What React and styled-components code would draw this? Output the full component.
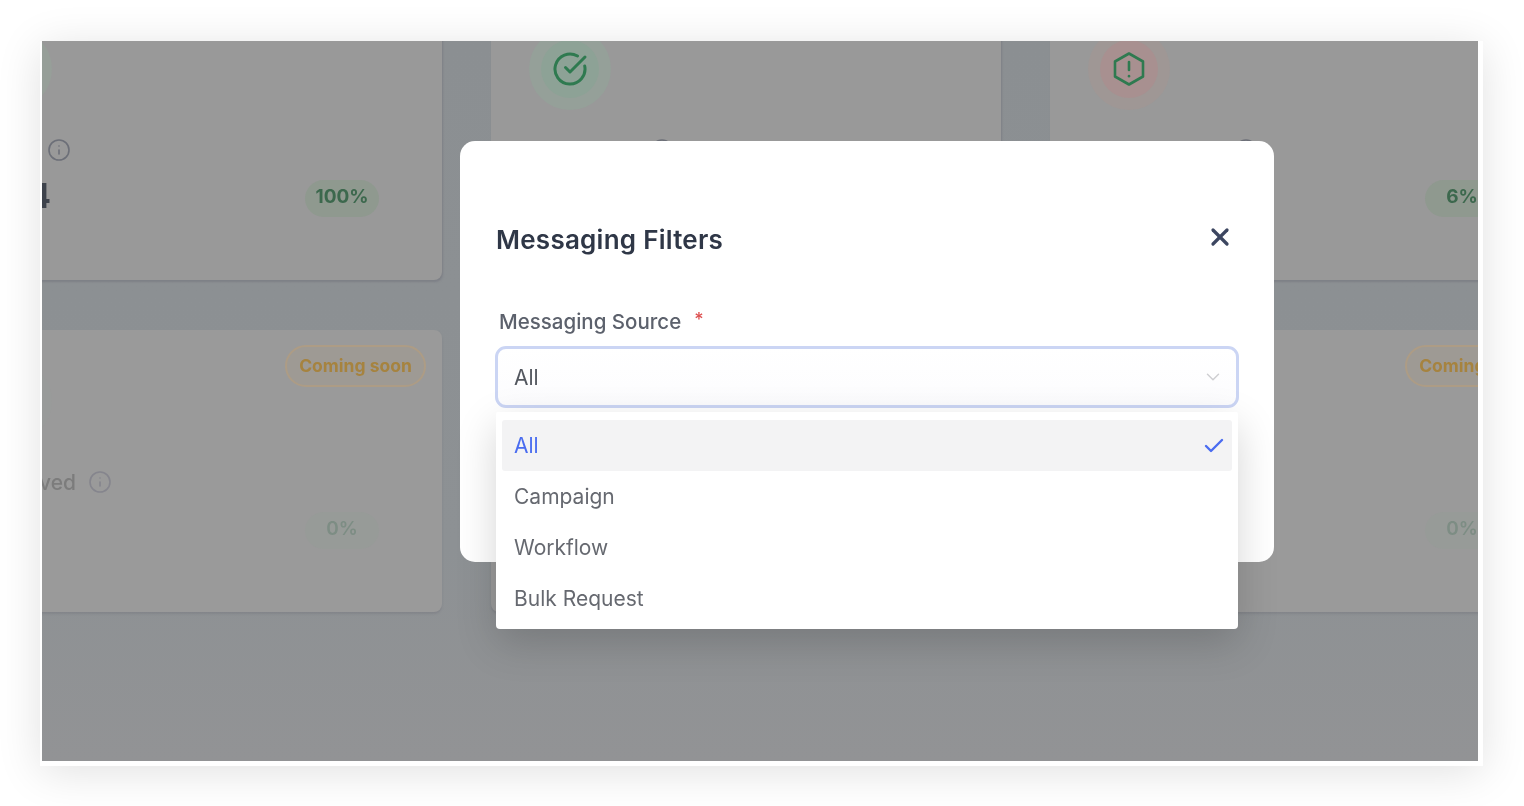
import React from "react";
import styled, { createGlobalStyle } from "styled-components";
import { Check, ChevronDown, CircleCheckBig, Info, X } from "lucide-react";

const Global = createGlobalStyle`
  html, body { margin: 0; padding: 0; background: #fff; height: 806px; overflow: hidden; }
  body { font-family: Inter, "Liberation Sans", sans-serif; }
`;

const Frame = styled.div`
  box-sizing: border-box;
  margin: 41px 0 0 40px;
  width: 1443px;
  height: 725px;
  padding: 0 5px 5px 2px;
  background: #fff;
  box-shadow: 0 6px 42px rgba(0, 0, 0, 0.12);
`;

const Shot = styled.div`
  position: relative;
  height: 720px;
  overflow: hidden;
  background: linear-gradient(#8b8f92, #8d9194 70%, #929395);
  filter: blur(0.7px);
`;

const CardGrid = styled.div`
  display: grid;
  grid-template-columns: 510px 510px 512px;
  grid-auto-rows: 282px;
  column-gap: 49px;
  row-gap: 50px;
  margin: -43px 0 0 -110px;
`;

const Card = styled.div`
  position: relative;
  box-sizing: border-box;
  padding: 30px 63px 0 38px;
  background: ${(p) => (p.$soon ? "#9a9a9a" : "#999999")};
  border-radius: 8px;
  box-shadow: ${(p) =>
    p.$soon
      ? "0 2px 2px rgba(105, 105, 115, 0.3)"
      : "1px 2px 2px rgba(105, 105, 118, 0.4)"};
`;

const Halo = styled.div`
  width: 82px;
  height: 82px;
  border-radius: 50%;
  display: flex;
  align-items: center;
  justify-content: center;
  color: ${(p) => p.$ink};
  background: ${(p) => p.$outer};
`;

const HaloCore = styled.div`
  width: 58px;
  height: 58px;
  border-radius: 50%;
  display: flex;
  align-items: center;
  justify-content: center;
  background: ${(p) => p.$inner};
`;

const LabelRow = styled.div`
  display: flex;
  align-items: center;
  height: 24px;
  margin-top: 28px;
  color: ${(p) => p.$ink};
`;

const LabelText = styled.span`
  flex: none;
  box-sizing: border-box;
  width: ${(p) => p.$w}px;
  padding-right: 12px;
  text-align: right;
  font-size: 21px;
  font-weight: 500;
  color: #7c7c7c;
  white-space: nowrap;
`;

const ValueRow = styled.div`
  display: flex;
  align-items: center;
  justify-content: space-between;
  height: 37px;
  margin-top: 18px;
`;

const Value = styled.span`
  font-size: 34px;
  font-weight: 700;
  line-height: 37px;
  margin-top: -6px;
  color: #3e434c;
`;

const Pct = styled.span`
  box-sizing: border-box;
  margin-left: auto;
  min-width: 74px;
  height: 37px;
  padding: 0 4px 5px;
  border-radius: 19px;
  display: flex;
  align-items: center;
  justify-content: center;
  font-size: 19px;
  font-weight: ${(p) => (p.$muted ? 600 : 700)};
  color: ${(p) => (p.$muted ? "#7d8d84" : "#3c684d")};
  background: ${(p) => (p.$muted ? "#979b98" : "#8f998f")};
`;

const Soon = styled.span`
  position: absolute;
  top: 15px;
  right: 16px;
  box-sizing: border-box;
  width: 141px;
  height: 42px;
  border-radius: 21px;
  border: 2px solid #ad9c85;
  background: #9e9a94;
  color: #a6833f;
  font-size: 17.5px;
  font-weight: 700;
  padding-bottom: 2px;
  display: flex;
  align-items: center;
  justify-content: center;
  white-space: nowrap;
`;

const Modal = styled.div`
  position: absolute;
  left: 418px;
  top: 100px;
  box-sizing: border-box;
  width: 814px;
  height: 421px;
  padding: 84px 35px 0 36px;
  background: #fff;
  border-radius: 15px;
`;

const ModalHead = styled.div`
  display: flex;
  align-items: center;
  justify-content: space-between;
  height: 30px;
  margin-bottom: 53px;
`;

const Title = styled.h2`
  margin: 0;
  font-size: 26px;
  line-height: 30px;
  font-weight: 600;
  letter-spacing: 0.25px;
  color: #2f3747;
`;

const Close = styled.button`
  border: 0;
  padding: 0;
  background: none;
  color: #3c4660;
  display: flex;
  margin: -7px 5px 0 0;
`;

const FieldLabel = styled.div`
  display: flex;
  align-items: center;
  height: 26px;
  padding-left: 3px;
  font-size: 20.5px;
  font-weight: 500;
  color: #5c616c;
`;

const Star = styled.span`
  margin: -4px 0 0 13px;
  font-size: 18px;
  color: #dd4f4f;
`;

const Select = styled.div`
  box-sizing: border-box;
  display: flex;
  align-items: center;
  justify-content: space-between;
  margin: 12px 0 0 -1px;
  width: 744px;
  height: 62px;
  padding: 0 12px 0 16px;
  border: 3px solid #cbd5f4;
  border-radius: 11px;
  background: linear-gradient(#fff, #fcfcfe);
  font-size: 21px;
  color: #53575f;
`;

const Caret = styled(ChevronDown)`
  color: #cfcfd2;
`;

const Menu = styled.ul`
  position: absolute;
  left: 36px;
  top: 271px;
  box-sizing: border-box;
  width: 742px;
  height: 217px;
  margin: 0;
  padding: 8px 6px 0;
  list-style: none;
  background: #fff;
  border-radius: 2px 2px 4px 4px;
  box-shadow: 0 14px 40px rgba(0, 0, 0, 0.17);
`;

const Option = styled.li`
  box-sizing: border-box;
  display: flex;
  align-items: center;
  justify-content: space-between;
  height: 51px;
  padding: 0 6px 0 12px;
  border-radius: 3px;
  font-size: 21px;
  color: ${(p) => (p.$on ? "#4a6cf0" : "#666970")};
  background: ${(p) => (p.$on ? "#f3f3f4" : "transparent")};
`;

const HexAlert = () => (
  <svg width="34" height="36" viewBox="0 0 34 36" fill="none" stroke="currentColor" strokeWidth="2.6" strokeLinejoin="round" strokeLinecap="round">
    <path d="M17 2.5 31 10.5V25.5L17 33.5 3 25.5V10.5Z" />
    <path d="M17 11V19" />
    <path d="M17 25V25.2" />
  </svg>
);

const cards = [
  { halo: ["#979f99", "#91a097", "#3b7a55"], w: 77, value: "1234", pct: "100%" },
  { halo: ["#95a099", "#8da296", "#2f7a50"], w: 121, icon: <CircleCheckBig size={36} strokeWidth={2} />, pct: "" },
  { halo: ["#9f9795", "#a89090", "#2f7a50"], w: 146, icon: <HexAlert />, pct: "6%" },
  { halo: ["#999b9a", "#969d99", "#6f8a78"], w: 118, text: "Received", pct: "0%", muted: true, soon: true },
  { halo: ["#999b9a", "#969d99", "#6f8a78"], w: 118, pct: "0%", muted: true, soon: true },
  { halo: ["#999b9a", "#969d99", "#6f8a78"], w: 118, pct: "0%", muted: true, soon: true },
];

const options = ["All", "Campaign", "Workflow", "Bulk Request"];

export default function App() {
  return (
    <>
      <Global />
      <Frame>
        <Shot>
          <CardGrid>
            {cards.map((c, i) => (
              <Card key={i} $soon={c.soon}>
                <Halo $outer={c.halo[0]} $ink={c.halo[2]}>
                  <HaloCore $inner={c.halo[1]}>{c.icon}</HaloCore>
                </Halo>
                <LabelRow $ink={c.soon ? "#85858d" : "#6c6f78"}>
                  <LabelText $w={c.w}>{c.text}</LabelText>
                  <Info size={24} strokeWidth={1.6} />
                </LabelRow>
                <ValueRow>
                  {c.value && <Value>{c.value}</Value>}
                  {c.pct && <Pct $muted={c.muted}>{c.pct}</Pct>}
                </ValueRow>
                {c.soon && <Soon>Coming soon</Soon>}
              </Card>
            ))}
          </CardGrid>
          <Modal>
            <ModalHead>
              <Title>Messaging Filters</Title>
              <Close aria-label="Close">
                <X size={28} strokeWidth={2.8} />
              </Close>
            </ModalHead>
            <FieldLabel>
              Messaging Source<Star>*</Star>
            </FieldLabel>
            <Select>
              All
              <Caret size={22} strokeWidth={1.6} />
            </Select>
            <Menu>
              {options.map((o, i) => (
                <Option key={o} $on={i === 0}>
                  {o}
                  {i === 0 && <Check size={24} strokeWidth={2.4} />}
                </Option>
              ))}
            </Menu>
          </Modal>
        </Shot>
      </Frame>
    </>
  );
}
